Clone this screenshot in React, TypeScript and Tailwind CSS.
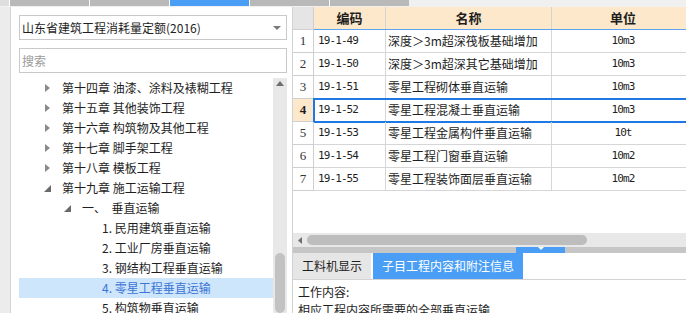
import React from 'react';

const cjk = "font-['Noto_Sans_CJK_SC','Noto_Sans',sans-serif]";
const mono = "font-['DejaVu_Sans_Mono',monospace] text-[11px] tracking-[-0.9px]";

type TreeNode = { label: string; level: 1 | 2 | 3; arrow?: 'closed' | 'open'; selected?: boolean };

const tree: TreeNode[] = [
  { label: '第十四章 油漆、涂料及裱糊工程', level: 1, arrow: 'closed' },
  { label: '第十五章 其他装饰工程', level: 1, arrow: 'closed' },
  { label: '第十六章 构筑物及其他工程', level: 1, arrow: 'closed' },
  { label: '第十七章 脚手架工程', level: 1, arrow: 'closed' },
  { label: '第十八章 模板工程', level: 1, arrow: 'closed' },
  { label: '第十九章 施工运输工程', level: 1, arrow: 'open' },
  { label: '一、  垂直运输', level: 2, arrow: 'open' },
  { label: '1. 民用建筑垂直运输', level: 3 },
  { label: '2. 工业厂房垂直运输', level: 3 },
  { label: '3. 钢结构工程垂直运输', level: 3 },
  { label: '4. 零星工程垂直运输', level: 3, selected: true },
  { label: '5. 构筑物垂直运输', level: 3 },
];

const indent = { 1: 'pl-[19px]', 2: 'pl-[39px]', 3: 'pl-[59px]' };

const rows = [
  ['1', '19-1-49', '深度＞3m超深筏板基础增加', '10m3'],
  ['2', '19-1-50', '深度＞3m超深其它基础增加', '10m3'],
  ['3', '19-1-51', '零星工程砌体垂直运输', '10m3'],
  ['4', '19-1-52', '零星工程混凝土垂直运输', '10m3'],
  ['5', '19-1-53', '零星工程金属构件垂直运输', '10t'],
  ['6', '19-1-54', '零星工程门窗垂直运输', '10m2'],
  ['7', '19-1-55', '零星工程装饰面层垂直运输', '10m2'],
];

const strip = [
  { w: 'w-[9px]', c: 'bg-[#dedede]' },
  { w: 'w-[79px]', c: 'bg-[#b9b9b9]' },
  { w: 'w-[79px]', c: 'bg-[#b9b9b9]' },
  { w: 'w-[79px]', c: 'bg-[#4a9ef5]' },
  { w: 'w-[79px]', c: 'bg-[#b9b9b9]' },
  { w: 'w-[79px]', c: 'bg-[#b9b9b9]' },
];

function Arrow({ kind }: { kind: 'closed' | 'open' }) {
  return kind === 'closed' ? (
    <svg width="5" height="8" viewBox="0 0 5 8">
      <path d="M0 0 L5 4 L0 8 Z" fill="#8a8a8a" />
    </svg>
  ) : (
    <svg width="7" height="7" viewBox="0 0 7 7">
      <path d="M7 0 L7 7 L0 7 Z" fill="#6a6a6a" />
    </svg>
  );
}

export default function App() {
  return (
    <div className={`w-[686px] h-[313px] overflow-hidden bg-white flex flex-col text-[#1e1e1e] text-[12px] ${cjk}`}>
      {/* tab strip */}
      <div className="h-[7px] shrink-0 flex bg-[#f0f0f0]">
        <div className="flex h-[6px] bg-white gap-px">
          {strip.map((s, i) => (
            <div key={i} className={`${s.w} ${s.c}`} />
          ))}
        </div>
      </div>

      <div className="flex flex-1 min-h-0">
        {/* outer margin */}
        <div className="w-[11px] shrink-0 bg-[#ececec] border-r border-[#d6d6d6]" />

        {/* left panel */}
        <div className="w-[281px] shrink-0 flex flex-col pl-[8px] pr-[5px] pt-[8px] bg-white">
          <div className="h-[25px] border border-[#c9c9c9] flex items-center pl-[2px] pr-[5px]">
            <span className="flex-1">山东省建筑工程消耗量定额(2016)</span>
            <svg width="8" height="4" viewBox="0 0 8 4">
              <path d="M0 0 L8 0 L4 4 Z" fill="#7a7a7a" />
            </svg>
          </div>
          <div className="h-[25px] mt-[8px] border border-[#c9c9c9] flex items-center pl-[2px] text-[#9a9a9a]">
            搜索
          </div>
          <div className="flex flex-1 min-h-0 mt-[5px]">
            <div className="flex-1 flex flex-col">
              {tree.map((n, i) => (
                <div
                  key={i}
                  className={`h-[20px] shrink-0 flex items-center ${indent[n.level]} ${
                    n.selected ? 'bg-[#cde6fb] text-[#3d74d6]' : ''
                  }`}
                >
                  <div className="w-[18px] flex justify-center items-center">
                    {n.arrow && <Arrow kind={n.arrow} />}
                  </div>
                  <span className="ml-[6px] whitespace-pre leading-none">{n.label}</span>
                </div>
              ))}
            </div>
            <div className="w-[14px] shrink-0 bg-[#e8e8e8] flex flex-col items-center">
              <svg className="mt-[3px]" width="8" height="5" viewBox="0 0 8 5">
                <path d="M0 5 L4 0 L8 5 Z" fill="#6e6e6e" />
              </svg>
              <div className="mt-[167px] w-[10px] flex-1 rounded-full bg-[#c2c2c2]" />
            </div>
          </div>
        </div>

        {/* right panel */}
        <div className="flex-1 min-w-0 flex flex-col border-l border-[#d2d2d2] overflow-hidden">
          <div className="h-[226px] shrink-0 overflow-hidden">
            <div className="flex h-[23px] w-[543px]">
              <div className="w-[21px] shrink-0 bg-[#e5e5e5] border-r border-b border-[#cfcfcf]" />
              <div className="flex border-b border-[#5ea2f2] bg-[#fde8cc] text-[13px] font-bold">
                <div className="w-[72px] border-r border-[#d3d3d3] flex items-center justify-center">编码</div>
                <div className="w-[166px] border-r border-[#d3d3d3] flex items-center justify-center">名称</div>
                <div className="w-[142px] flex items-center justify-center">单位</div>
              </div>
            </div>
            {rows.map((r) => {
              const sel = r[0] === '4';
              return (
                <div key={r[0]} className="flex h-[23px] w-[543px]">
                  <div
                    className={`w-[21px] shrink-0 border-r border-b border-[#cfcfcf] flex items-center justify-center font-['Liberation_Serif',serif] text-[13px] ${
                      sel ? 'bg-[#fde8cc] font-bold' : 'bg-white text-[#333]'
                    }`}
                  >
                    {r[0]}
                  </div>
                  <div
                    className={`flex border-b border-[#d6d6d6] ${
                      sel ? 'outline-2 outline-[#1f78e4] -outline-offset-1' : ''
                    }`}
                  >
                    <div className={`w-[72px] border-r border-[#d6d6d6] flex items-center pl-[4px] ${mono}`}>
                      {r[1]}
                    </div>
                    <div className="w-[166px] border-r border-[#d6d6d6] flex items-center pl-[2px]">
                      {r[2]}
                    </div>
                    <div className={`w-[142px] flex items-center justify-center ${mono}`}>{r[3]}</div>
                  </div>
                </div>
              );
            })}
          </div>

          {/* horizontal scrollbar */}
          <div className="h-[14px] shrink-0 bg-[#e8e8e8] flex items-center">
            <svg className="ml-[5px]" width="4" height="7" viewBox="0 0 4 7">
              <path d="M4 0 L0 3.5 L4 7 Z" fill="#6e6e6e" />
            </svg>
            <div className="ml-[5px] w-[280px] h-[10px] rounded-full bg-[#bdbdbd]" />
          </div>

          {/* splitter */}
          <div className="h-[6px] shrink-0 bg-[#c6c6c6] flex">
            <div className="ml-[223px] w-[49px] bg-[#4a9ef5] flex justify-center items-start">
              <svg width="6" height="3" viewBox="0 0 6 3">
                <path d="M0 0 L6 0 L3 3 Z" fill="#fff" />
              </svg>
            </div>
          </div>

          {/* tabs */}
          <div className="h-[27px] shrink-0 flex gap-[2px] border-b border-[#d3d3d3]">
            <div className="w-[78px] bg-[#e6e6e6] flex items-center justify-center">工料机显示</div>
            <div className="w-[150px] bg-[#4a9ef5] text-white flex items-center justify-center">子目工程内容和附注信息</div>
          </div>

          <div className="pl-[5px] pt-[3px] leading-[18px]">
            <div>工作内容:</div>
            <div>相应工程内容所需要的全部垂直运输.</div>
          </div>
        </div>
      </div>
    </div>
  );
}
